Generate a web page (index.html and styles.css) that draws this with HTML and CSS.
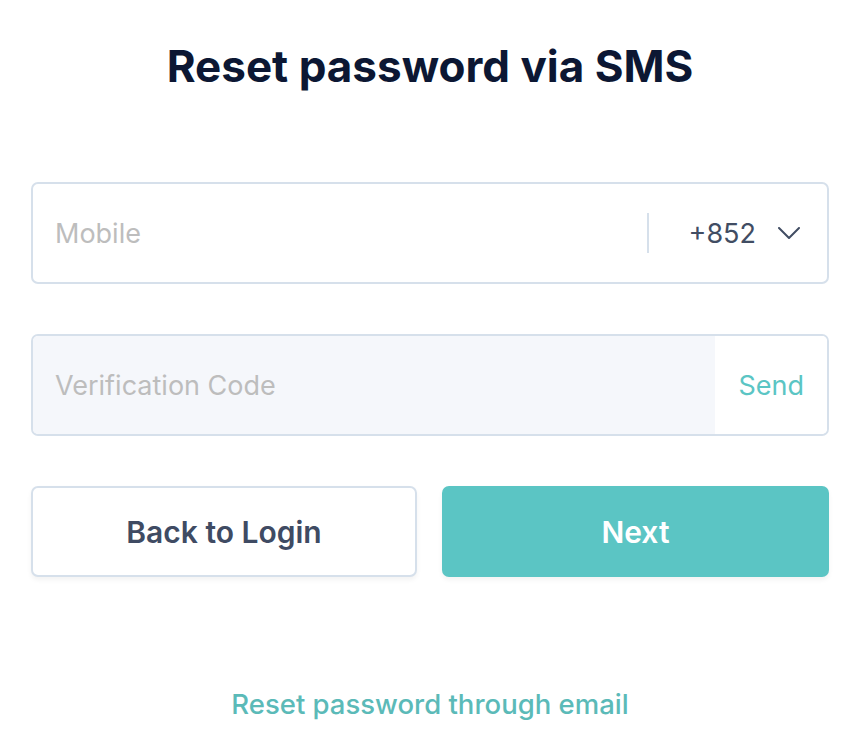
FILE: index.html
```html
<!DOCTYPE html>
<html lang="en">
<head>
    <meta charset="UTF-8">
    <meta name="viewport" content="width=device-width, initial-scale=1.0">
    <title>Reset password via SMS</title>
    <link rel="stylesheet" href="styles.css">
</head>
<body>
    <div class="reset-container">
        <h1>Reset password via SMS</h1>
        <form id="reset-form">
            <div class="field">
                <input type="text" class="field-input" placeholder="Mobile">
                <div class="divider"></div>
                <div class="country-select">
                    <span>+852</span>
                    <svg width="22" height="12" viewBox="0 0 22 12" fill="none">
                        <path d="M1 1l10 10L21 1" stroke="#414d63" stroke-width="2" stroke-linecap="round" stroke-linejoin="round"/>
                    </svg>
                </div>
            </div>

            <div class="field field-code">
                <input type="text" class="field-input" placeholder="Verification Code">
                <button type="button" class="send-btn">Send</button>
            </div>

            <div class="form-buttons">
                <button type="button" class="back-button">Back to Login</button>
                <button type="submit" class="next-button">Next</button>
            </div>
        </form>

        <a href="#" class="email-link">Reset password through email</a>
    </div>
</body>
</html>
```

FILE: styles.css
```css
/* General Reset */
* {
    margin: 0;
    padding: 0;
    box-sizing: border-box;
}

body {
    font-family: 'Inter', sans-serif;
    background: #ffffff;
    color: #333;
}

.reset-container {
    width: 798px;
    margin-left: 31px;
    display: flex;
    flex-direction: column;
}

/* Title */
h1 {
    font-size: 44px;
    line-height: 52px;
    font-weight: 700;
    color: #0c1733;
    text-align: center;
    margin-top: 40px;
    margin-bottom: 90px;
}

/* Fields */
.field {
    display: flex;
    align-items: center;
    height: 102px;
    border: 2px solid #d6e0eb;
    border-radius: 7px;
    margin-bottom: 50px;
    overflow: hidden;
    background: #ffffff;
}

.field-input {
    flex: 1;
    height: 100%;
    border: none;
    outline: none;
    background: transparent;
    padding-left: 22px;
    font-family: 'Inter', sans-serif;
    font-size: 27px;
    color: #414d63;
}

.field-input::placeholder {
    color: #bdbdbd;
}

.divider {
    width: 2px;
    height: 40px;
    background: #d6e0eb;
}

.country-select {
    display: flex;
    align-items: center;
    padding: 0 27px 0 40px;
    font-size: 27px;
    color: #414d63;
}

.country-select svg {
    margin-left: 22px;
}

.field-code .field-input {
    background: #f5f7fb;
}

.send-btn {
    width: 112px;
    height: 100%;
    border: none;
    background: #ffffff;
    font-family: 'Inter', sans-serif;
    font-size: 27px;
    color: #5bc5c4;
    text-align: right;
    padding-right: 23px;
    cursor: pointer;
}

/* Buttons */
.form-buttons {
    display: grid;
    grid-template-columns: 386px 387px;
    column-gap: 25px;
}

.back-button, .next-button {
    height: 91px;
    border-radius: 7px;
    font-family: 'Inter', sans-serif;
    font-size: 30px;
    font-weight: 600;
    cursor: pointer;
    box-shadow: 0 3px 5px rgba(0, 0, 0, 0.05);
}

.back-button {
    background: #ffffff;
    border: 2px solid #d6e0eb;
    color: #3f4b63;
}

.next-button {
    background: #5bc5c4;
    border: none;
    color: #ffffff;
}

/* Email link */
.email-link {
    margin-top: 110px;
    text-align: center;
    font-size: 27.5px;
    font-weight: 500;
    color: #5bbab8;
    text-decoration: none;
}
```
